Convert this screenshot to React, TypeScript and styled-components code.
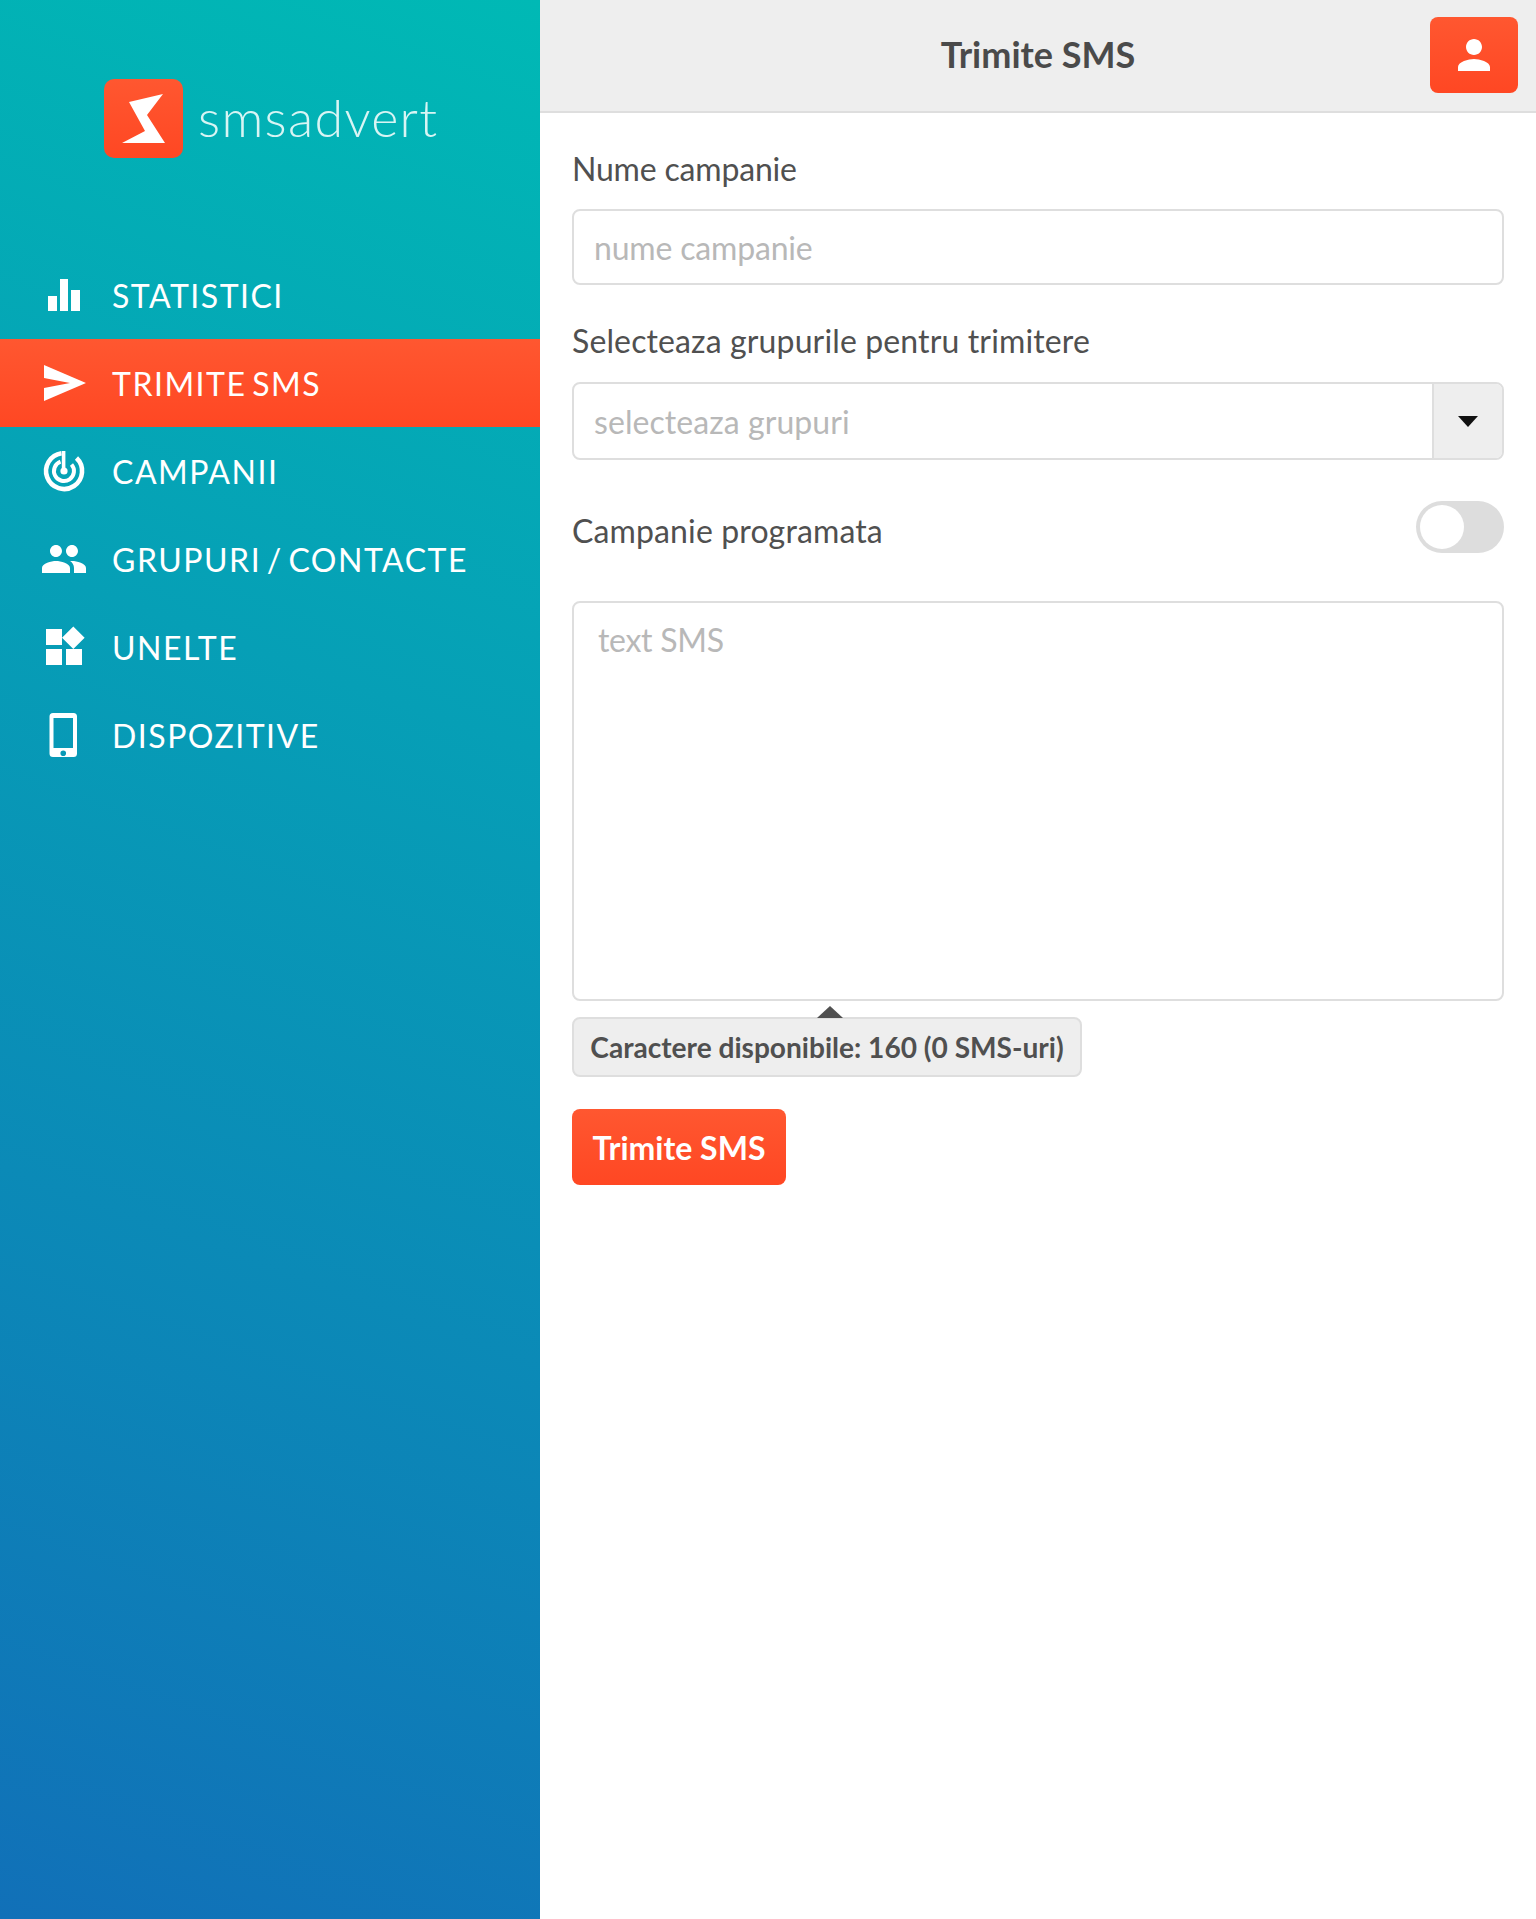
import React from "react";
import styled, { createGlobalStyle } from "styled-components";

const Global = createGlobalStyle`
  html, body { margin: 0; padding: 0; background: #fff; }
  * { box-sizing: border-box; }
  body { font-family: Lato, "Liberation Sans", sans-serif; color: #505050; }
`;

const Page = styled.div`
  display: flex;
  width: 1536px;
  height: 1919px;
  overflow: hidden;
`;

const Sidebar = styled.aside`
  width: 540px;
  flex: none;
  background: linear-gradient(200deg, #00b9b5 0%, #1170b8 100%);
`;

const Brand = styled.div`
  display: flex;
  align-items: flex-start;
  height: 251px;
  padding: 79px 0 0 104px;
`;

const BrandMark = styled.svg`
  width: 79px;
  height: 79px;
  flex: none;
`;

const BrandName = styled.div`
  margin: 8px 0 0 15px;
  font-size: 52px;
  line-height: 60px;
  font-weight: 300;
  letter-spacing: 1.3px;
  color: #d8f5f4;
`;

const Nav = styled.nav`
  display: flex;
  flex-direction: column;
`;

const NavItem = styled.a<{ $active?: boolean }>`
  display: flex;
  align-items: center;
  gap: 24px;
  height: 88px;
  padding-left: 40px;
  color: #fff;
  font-size: 32px;
  letter-spacing: 1.5px;
  word-spacing: -4px;
  background: ${(p) =>
    p.$active ? "linear-gradient(180deg, #ff5730 0%, #ff4723 100%)" : "transparent"};
`;

const NavIcon = styled.svg`
  width: 48px;
  height: 48px;
  flex: none;
  fill: #fff;
`;

const Main = styled.main`
  flex: 1;
  min-width: 0;
  display: flex;
  flex-direction: column;
`;

const Header = styled.header`
  position: relative;
  height: 113px;
  flex: none;
  display: flex;
  align-items: center;
  justify-content: center;
  padding-bottom: 4px;
  background: #eeeeee;
  border-bottom: 2px solid #dedede;
  font-size: 36px;
  font-weight: 700;
  color: #4a4a4a;
`;

const ProfileButton = styled.button`
  position: absolute;
  top: 17px;
  right: 18px;
  width: 88px;
  height: 76px;
  padding: 0;
  border: 0;
  border-radius: 8px;
  display: flex;
  align-items: center;
  justify-content: center;
  background: linear-gradient(180deg, #ff5730 0%, #ff4723 100%);
`;

const ProfileIcon = styled.svg`
  width: 48px;
  height: 48px;
  fill: #fff;
`;

const Form = styled.form`
  display: flex;
  flex-direction: column;
  padding: 0 32px;
`;

const Label = styled.div<{ $track?: number }>`
  height: 96px;
  padding-top: 35px;
  font-size: 32px;
  line-height: 42px;
  letter-spacing: ${(p) => p.$track ?? 0}px;
  color: #505050;
`;

const Field = styled.div`
  height: 76px;
  padding: 0 20px;
  display: flex;
  align-items: center;
  border: 2px solid #dedede;
  border-radius: 8px;
  font-size: 32px;
  letter-spacing: -0.18px;
  color: #b8b8b8;
`;

const SecondLabel = styled(Label)`
  height: 97px;
`;

const SelectBox = styled.div`
  height: 78px;
  display: flex;
  border: 2px solid #dedede;
  border-radius: 8px;
  overflow: hidden;
  font-size: 32px;
  letter-spacing: 0.07px;
  color: #b8b8b8;
`;

const SelectValue = styled.div`
  flex: 1;
  display: flex;
  align-items: center;
  padding: 0 20px;
`;

const SelectCaret = styled.div`
  width: 70px;
  flex: none;
  display: flex;
  align-items: center;
  justify-content: center;
  background: #eeeeee;
  border-left: 2px solid #dedede;
`;

const CaretIcon = styled.svg`
  width: 20px;
  height: 11px;
  fill: #111;
`;

const ToggleRow = styled.div`
  display: flex;
  align-items: center;
  justify-content: space-between;
  margin-top: 41px;
  height: 52px;
  font-size: 32px;
  letter-spacing: 0.13px;
  color: #505050;
`;

const ToggleText = styled.span`
  margin-top: 6px;
`;

const Toggle = styled.div`
  width: 88px;
  height: 52px;
  padding: 4px;
  border-radius: 26px;
  background: #dddddd;
`;

const Knob = styled.div`
  width: 44px;
  height: 44px;
  border-radius: 50%;
  background: #fff;
`;

const TextArea = styled.div`
  margin-top: 48px;
  height: 400px;
  padding: 17px 24px;
  border: 2px solid #dedede;
  border-radius: 8px;
  font-size: 32px;
  line-height: 40px;
  letter-spacing: -0.3px;
  color: #b8b8b8;
`;

const Counter = styled.div`
  position: relative;
  align-self: flex-start;
  margin-top: 16px;
  width: 510px;
  height: 60px;
  display: flex;
  align-items: center;
  justify-content: center;
  background: #eeeeee;
  border: 2px solid #dedede;
  border-radius: 8px;
  font-size: 28.1px;
  font-weight: 700;
  color: #505050;
  &::before {
    content: "";
    position: absolute;
    top: -13px;
    left: 243px;
    border-left: 13px solid transparent;
    border-right: 13px solid transparent;
    border-bottom: 12px solid #505050;
  }
`;

const Submit = styled.button`
  align-self: flex-start;
  margin-top: 32px;
  width: 214px;
  height: 76px;
  border: 0;
  border-radius: 8px;
  padding: 0;
  background: linear-gradient(180deg, #ff5730 0%, #ff4723 100%);
  color: #fff;
  font-family: Lato, "Liberation Sans", sans-serif;
  font-size: 32px;
  font-weight: 700;
`;

const items = [
  {
    label: "STATISTICI",
    icon: (
      <>
        <rect x="8" y="25" width="9" height="15" />
        <rect x="20" y="8" width="8" height="32" />
        <rect x="31" y="19" width="9" height="21" />
      </>
    ),
  },
  {
    label: "TRIMITE SMS",
    active: true,
    icon: <polygon points="4,6 46,24 4,42 4,29 30,24 4,19" />,
  },
  {
    label: "CAMPANII",
    icon: (
      <>
        <path
          d="M21.500 6.200A18 18 0 1 0 36.500 11"
          fill="none"
          stroke="#fff"
          strokeWidth="4.600"
        />
        <path
          d="M20.500 14.700A10 10 0 1 0 31.500 17.500"
          fill="none"
          stroke="#fff"
          strokeWidth="4"
        />
        <rect x="21.800" y="4" width="3.600" height="20" />
        <circle cx="24" cy="24" r="3.600" />
      </>
    ),
  },
  {
    label: "GRUPURI / CONTACTE",
    icon: (
      <path
        transform="scale(2)"
        d="M16 11c1.660 0 2.990-1.340 2.990-3S17.660 5 16 5c-1.660 0-3 1.340-3 3s1.340 3 3 3zm-8 0c1.660 0 2.990-1.340 2.990-3S9.660 5 8 5C6.340 5 5 6.340 5 8s1.340 3 3 3zm0 2c-2.330 0-7 1.170-7 3.500V19h14v-2.500c0-2.330-4.670-3.500-7-3.500zm8 0c-.29 0-.62.02-.97.05 1.160.84 1.970 1.970 1.970 3.450V19h6v-2.500c0-2.330-4.670-3.500-7-3.500z"
      />
    ),
  },
  {
    label: "UNELTE",
    icon: (
      <path
        transform="scale(2)"
        d="M13 13v8h8v-8h-8zM3 21h8v-8H3v8zM3 3v8h8V3H3zm13.660-1.310L11 7.340 16.660 13l5.660-5.660-5.660-5.650z"
      />
    ),
  },
  {
    label: "DISPOZITIVE",
    icon: (
      <path
        fillRule="evenodd"
        d="M13 2h20.500a3.500 3.500 0 0 1 3.500 3.500v37a3.500 3.500 0 0 1-3.500 3.500H13a3.500 3.500 0 0 1-3.500-3.500v-37A3.500 3.500 0 0 1 13 2zM13.500 7v30h19.500V7H13.500zm9.750 32.500a2.800 2.800 0 1 0 0 5.600a2.800 2.800 0 0 0 0-5.600z"
      />
    ),
  },
];

export default function App() {
  return (
    <Page>
      <Global />
      <Sidebar>
        <Brand>
          <BrandMark viewBox="0 0 79 79">
            <defs>
              <linearGradient id="markFill" x1="0" y1="0" x2="0" y2="1">
                <stop offset="0" stopColor="#ff5730" />
                <stop offset="1" stopColor="#ff4723" />
              </linearGradient>
            </defs>
            <rect width="79" height="79" rx="10" fill="url(#markFill)" />
            <polygon points="25,23 59,15 43,36 61,64 18,64 41,52" fill="#fff" />
          </BrandMark>
          <BrandName>smsadvert</BrandName>
        </Brand>
        <Nav>
          {items.map((it) => (
            <NavItem key={it.label} $active={it.active}>
              <NavIcon viewBox="0 0 48 48">{it.icon}</NavIcon>
              {it.label}
            </NavItem>
          ))}
        </Nav>
      </Sidebar>
      <Main>
        <Header>
          Trimite SMS
          <ProfileButton type="button" aria-label="Profil">
            <ProfileIcon viewBox="0 0 24 24">
              <path d="M12 12c2.210 0 4-1.790 4-4s-1.790-4-4-4-4 1.790-4 4 1.790 4 4 4zm0 2c-2.670 0-8 1.340-8 4v2h16v-2c0-2.660-5.330-4-8-4z" />
            </ProfileIcon>
          </ProfileButton>
        </Header>
        <Form>
          <Label $track={-0.18}>Nume campanie</Label>
          <Field>nume campanie</Field>
          <SecondLabel $track={0.13}>Selecteaza grupurile pentru trimitere</SecondLabel>
          <SelectBox>
            <SelectValue>selecteaza grupuri</SelectValue>
            <SelectCaret>
              <CaretIcon viewBox="0 0 20 11">
                <polygon points="0,0 20,0 10,11" />
              </CaretIcon>
            </SelectCaret>
          </SelectBox>
          <ToggleRow>
            <ToggleText>Campanie programata</ToggleText>
            <Toggle>
              <Knob />
            </Toggle>
          </ToggleRow>
          <TextArea>text SMS</TextArea>
          <Counter>Caractere disponibile: 160 (0 SMS-uri)</Counter>
          <Submit type="button">Trimite SMS</Submit>
        </Form>
      </Main>
    </Page>
  );
}
